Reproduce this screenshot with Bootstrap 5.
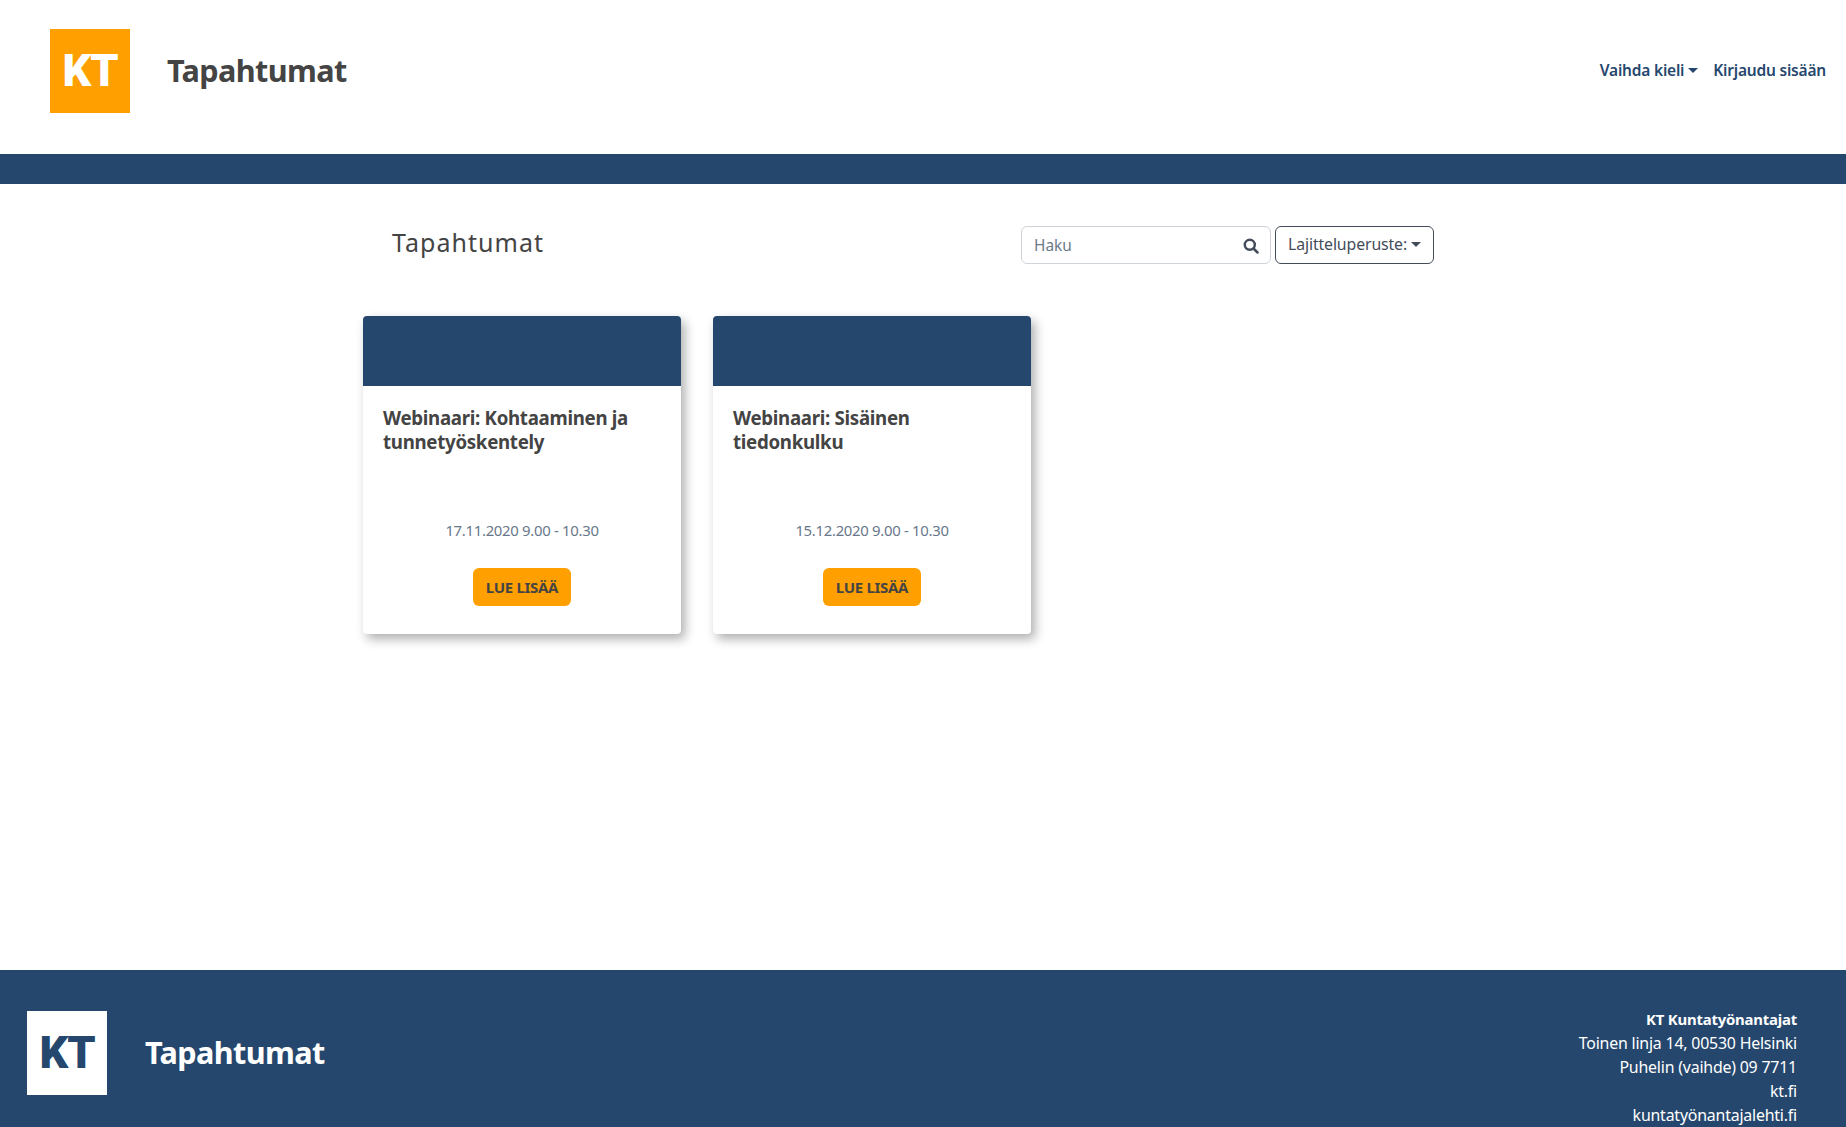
<!DOCTYPE html>
<html lang="fi">
<head>
<meta charset="utf-8">
<title>Tapahtumat</title>
<link href="https://cdn.jsdelivr.net/npm/bootstrap@5.3.0/dist/css/bootstrap.min.css" rel="stylesheet">
<style>
html,body{height:1127px;overflow:hidden}
body{font-family:"Noto Sans","Open Sans",sans-serif;color:#444;background:#fff;font-size:15px}
.kt-head{height:154px;padding:0 20px 12px 50px}
.kt-logo{width:80px;height:84px;flex:none;font-family:"Roboto",sans-serif;font-weight:900;font-size:45px;line-height:1;letter-spacing:-1px;padding-bottom:2px}
.kt-logo-o{background:#ffa000;color:#fff}
.kt-logo-w{background:#fff;color:#26476d}
.kt-brand{font-size:30.6px;font-weight:700;letter-spacing:-.6px;margin-left:37px;line-height:1.2;margin-bottom:2px}
.kt-brand-d{color:#444}
.kt-nav-link{color:#26476d;font-weight:600;font-size:15.5px;letter-spacing:-.2px;padding:0;text-decoration:none}
.kt-nav-link:hover{color:#26476d}
.kt-nav{gap:15px}
.dropdown-toggle::after{border-top-width:.33em;border-right-width:.33em;border-left-width:.33em;margin-left:.25em;vertical-align:.22em}
.kt-stripe{height:30px;background:#26476d}
.kt-main{width:1120px;height:786px;margin:0 auto;padding-top:42px}
.kt-tools{padding:0 49px 0 29px;height:38px}
.kt-h{font-size:25px;font-weight:400;letter-spacing:1.05px;color:#444;margin:0 0 7px}
.kt-search{width:250px;height:38px}
.kt-search .form-control{height:38px;font-size:15.4px;color:#6c757d;padding-left:12px;padding-right:36px;border-color:#ced4da}
.kt-search .form-control::placeholder{color:#6c7a89}
.kt-search svg{position:absolute;right:12px;top:12px}
.kt-sort{height:38px;font-size:15.8px;letter-spacing:-.1px;color:#444c5a;border:1px solid #444c5a;background:#fff;padding:0 12px;white-space:nowrap}
.kt-cards{margin-top:52px;gap:32px}
.kt-card{width:318px;height:318px;border:0;border-radius:4px;box-shadow:4px 5px 11px rgba(0,0,0,.32);overflow:hidden}
.kt-card-top{height:70px;background:#26476d}
.kt-card-body{padding:20px 20px 0}
.kt-title{font-size:18.7px;font-weight:700;letter-spacing:-.3px;line-height:24px;height:110px;margin:0;color:#444}
.kt-date{font-size:14.9px;letter-spacing:-.3px;color:#68778a;margin:0 0 27px;text-align:center;line-height:22px;padding-top:3px}
.kt-more{background:#ffa000;color:#444;font-weight:700;font-size:15px;letter-spacing:-.3px;width:98px;height:38px;padding:0;border:0;line-height:38px}
.kt-more:hover{background:#ffa000;color:#444}
.kt-foot{height:157px;background:#26476d;color:#fff;padding:41px 49px 0 27px}
.kt-foot .kt-brand{color:#fff;margin-top:0;margin-left:38px}
.kt-addr{font-size:15.9px;line-height:24px;text-align:right;letter-spacing:-.2px;margin-top:-4px}
.kt-addr strong{font-size:14.9px}
</style>
</head>
<body>
<header class="kt-head d-flex align-items-center justify-content-between">
  <div class="d-flex align-items-center">
    <div class="kt-logo kt-logo-o d-flex align-items-center justify-content-center">KT</div>
    <span class="kt-brand kt-brand-d">Tapahtumat</span>
  </div>
  <nav class="kt-nav d-flex align-items-center">
    <a class="kt-nav-link dropdown-toggle" href="#">Vaihda kieli</a>
    <a class="kt-nav-link" href="#">Kirjaudu sisään</a>
  </nav>
</header>
<div class="kt-stripe"></div>
<main class="kt-main">
  <div class="kt-tools d-flex align-items-center justify-content-between">
    <h1 class="kt-h">Tapahtumat</h1>
    <div class="d-flex gap-1">
      <div class="kt-search position-relative">
        <input class="form-control" type="text" placeholder="Haku">
        <svg width="16" height="16" viewBox="0 0 16 16" fill="none" stroke="#444c5a" stroke-width="2.5"><circle cx="6.8" cy="6.8" r="5"/><path d="M10.5 10.5 14.5 14.5" stroke-linecap="round"/></svg>
      </div>
      <button class="btn kt-sort dropdown-toggle" type="button">Lajitteluperuste:</button>
    </div>
  </div>
  <div class="kt-cards d-flex">
    <article class="card kt-card">
      <div class="kt-card-top"></div>
      <div class="kt-card-body">
        <h2 class="kt-title">Webinaari: Kohtaaminen ja tunnetyöskentely</h2>
        <p class="kt-date">17.11.2020 9.00 - 10.30</p>
        <div class="text-center"><a class="btn kt-more" href="#">LUE LISÄÄ</a></div>
      </div>
    </article>
    <article class="card kt-card">
      <div class="kt-card-top"></div>
      <div class="kt-card-body">
        <h2 class="kt-title">Webinaari: Sisäinen tiedonkulku</h2>
        <p class="kt-date">15.12.2020 9.00 - 10.30</p>
        <div class="text-center"><a class="btn kt-more" href="#">LUE LISÄÄ</a></div>
      </div>
    </article>
  </div>
</main>
<footer class="kt-foot d-flex justify-content-between">
  <div class="d-flex align-items-center align-self-start">
    <div class="kt-logo kt-logo-w d-flex align-items-center justify-content-center">KT</div>
    <span class="kt-brand">Tapahtumat</span>
  </div>
  <address class="kt-addr mb-0">
    <strong>KT Kuntatyönantajat</strong><br>
    Toinen linja 14, 00530 Helsinki<br>
    Puhelin (vaihde) 09 7711<br>
    kt.fi<br>
    kuntatyönantajalehti.fi
  </address>
</footer>
<script src="https://cdn.jsdelivr.net/npm/bootstrap@5.3.0/dist/js/bootstrap.bundle.min.js"></script>
</body>
</html>
